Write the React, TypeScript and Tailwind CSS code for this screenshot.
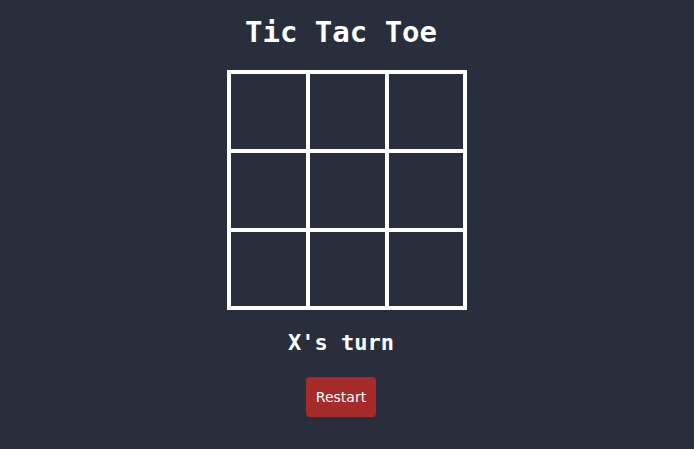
const cells = Array.from({ length: 9 }, (_, i) => i)

export default function App() {
  return (
    <div className="min-h-[449px] w-full bg-[#282e3b] flex flex-col items-center pt-[15px] gap-5 text-white">
      <h1 className="mr-3 text-[29px] leading-[35px] font-bold font-['DejaVu_Sans_Mono',monospace]">Tic Tac Toe</h1>

      <div className="grid grid-cols-[75px_75px_74px] grid-rows-[75px_75px_74px] gap-1 p-1 bg-white">
        {cells.map((i) => (
          <button key={i} className="bg-[#282e3b]" />
        ))}
      </div>

      <p className="mr-3 text-[22px] leading-[26px] font-bold font-['DejaVu_Sans_Mono',monospace]">X's turn</p>

      <button className="mr-3 mt-[1px] w-[70px] h-10 rounded bg-[#a52a2a] text-[14px] text-white font-['Comic_Sans_MS','DejaVu_Sans',sans-serif]">
        Restart
      </button>
    </div>
  )
}
